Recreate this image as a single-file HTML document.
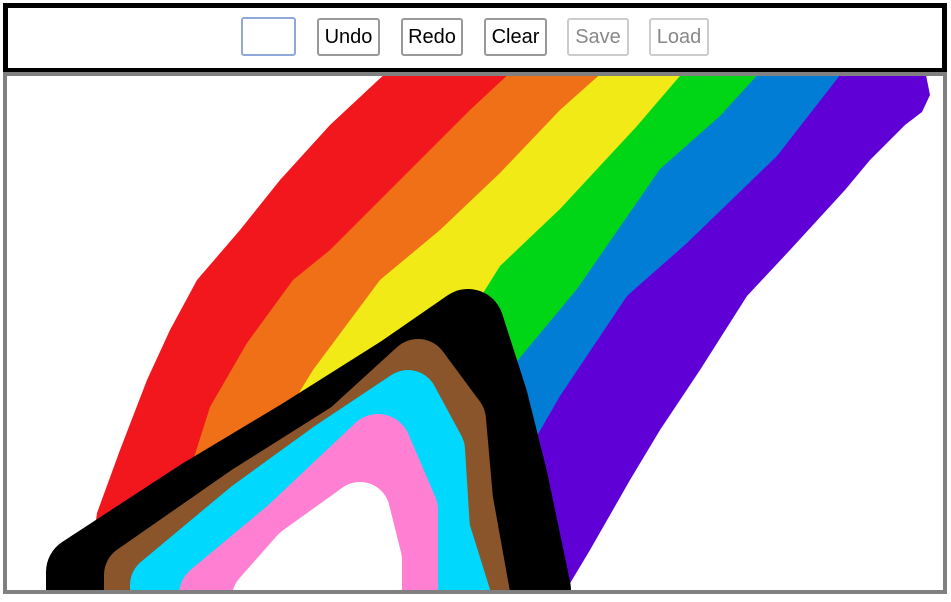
<!DOCTYPE html>
<html><head><style>
html,body{margin:0;padding:0;background:#fff;width:951px;height:602px;overflow:hidden;font-family:"Liberation Sans",Arial,sans-serif}
.bar{position:absolute;left:3px;top:3px;width:934px;height:60px;border:5px solid #000;background:#fff}
.b{position:absolute;top:10px;height:38px;border:2px solid #999;border-radius:3px;box-sizing:border-box;font-size:20px;line-height:34px;text-align:center;color:#000;background:#fff}
.d{border-color:#ccc;color:#888}
.cv{position:absolute;left:3px;top:72px;width:936px;height:514px;border:4px solid #808080;background:#fff;overflow:hidden}
</style></head><body>
<div class="bar">
<div class="b" style="left:233px;width:55px;top:9px;height:39px;border-color:#8fa8d8"></div>
<div class="b" style="left:309px;width:63px">Undo</div>
<div class="b" style="left:393px;width:62px">Redo</div>
<div class="b" style="left:476px;width:63px">Clear</div>
<div class="b d" style="left:559px;width:62px">Save</div>
<div class="b d" style="left:641px;width:60px">Load</div>
</div>
<div class="cv">
<svg width="936" height="514" viewBox="7 76 936 514" style="display:block" fill="none" stroke-linecap="round" stroke-linejoin="round">
<polygon fill="#5e00d6" points="0,70 925,70 930,95 922,112 905,125 870,160 845,190 790,250 747,296 700,370 660,430 630,480 590,550 560,600 0,600"/>
<polygon fill="#017dd5" points="0,70 844,70 777,156 687,243 627,296 560,396 533,443 515,520 500,600 0,600"/>
<polygon fill="#00d615" points="0,70 762,70 720,116 660,169 577,289 513,366 495,430 480,600 0,600"/>
<polygon fill="#f2ea16" points="0,70 685,70 637,126 560,209 500,266 460,330 430,400 0,600"/>
<polygon fill="#f07017" points="0,70 605,70 560,110 500,173 440,230 380,280 313,370 270,440 0,600"/>
<polygon fill="#f2171c" points="0,70 513,70 470,110 420,160 370,210 330,250 293,280 247,343 210,407 190,470 160,560 0,600"/>
<polygon fill="#fff" points="0,70 389,70 330,125 280,180 240,230 197,280 170,330 147,380 120,450 97,513 85,600 0,600"/>
<path stroke="#000" fill="#000" stroke-width="72" d="M82,572 L200,495 L300,435 L400,372 L468,325 L492,400 L512,480 L535,590 L82,610Z"/>
<path stroke="#8a552b" fill="#8a552b" stroke-width="62" d="M135,575 L250,495 L350,432 L418,370 L455,420 L462,500 L480,600 L135,610Z"/>
<path stroke="#00d8fe" fill="#00d8fe" stroke-width="60" d="M160,585 L250,510 L330,452 L408,400 L435,450 L440,530 L465,610 L160,610Z"/>
<path stroke="#ff80d3" fill="#ff80d3" stroke-width="66" d="M212,595 L290,530 L378,447 L405,510 L405,610 L212,610Z"/>
<path stroke="#fff" fill="#fff" stroke-width="60" d="M262,598 L300,555 L360,512 L372,560 L372,610 L262,610Z"/>
</svg>
</div>
</body></html>
